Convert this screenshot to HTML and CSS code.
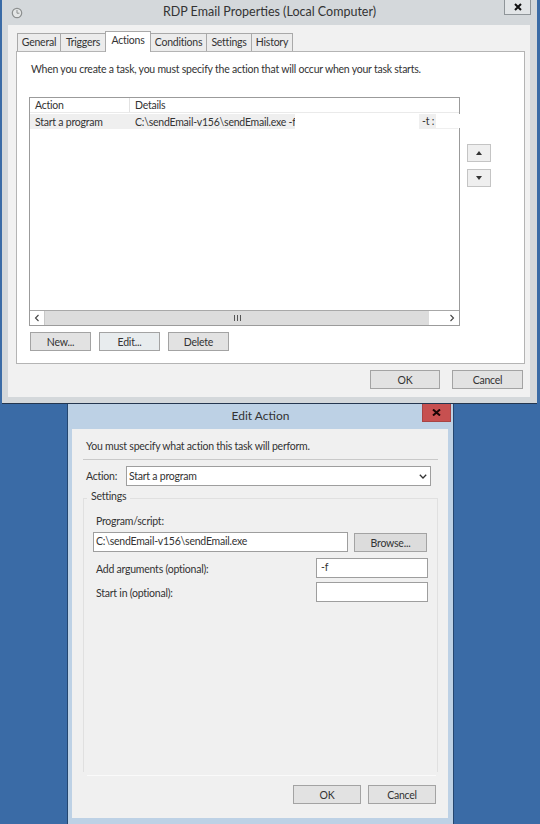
FILE: index.html
```html
<!DOCTYPE html>
<html lang="en">
<head>
    <meta charset="UTF-8">
    <meta name="viewport" content="width=device-width, initial-scale=1.0">
    <title>RDP Email Properties</title>
    <link rel="stylesheet" href="styles.css">
</head>
<body>

<div class="window props">
    <div class="titlebar">
        <svg class="clock" width="12" height="12" viewBox="0 0 12 12"><circle cx="6" cy="6" r="4.7" fill="#e4e6e6" stroke="#8c8f8f" stroke-width="1.2"/><path d="M6 3v3.2h2.4" fill="none" stroke="#8c8f8f"/></svg>
        <span class="title">RDP Email Properties (Local Computer)</span>
        <div class="closebtn">
            <svg width="8" height="8" viewBox="0 0 8 8"><path d="M1 1l6 6M7 1l-6 6" stroke="#111" stroke-width="2"/></svg>
        </div>
    </div>
    <div class="props-body">
        <div class="tabs">
            <div class="tab tab-general">General</div>
            <div class="tab tab-triggers">Triggers</div>
            <div class="tab tab-actions">Actions</div>
            <div class="tab tab-conditions">Conditions</div>
            <div class="tab tab-settings">Settings</div>
            <div class="tab tab-history">History</div>
        </div>
        <div class="panel">
            <p class="intro">When you create a task, you must specify the action that will occur when your task starts.</p>
            <div class="list-row">
                <div class="list">
                    <div class="list-head">
                        <div class="col-action">Action</div>
                        <div class="col-details">Details</div>
                    </div>
                    <div class="list-item">
                        <div class="col-action">Start a program</div>
                        <div class="col-details">C:\sendEmail-v156\sendEmail.exe -f</div>
                        <div class="redact"></div>
                        <div class="flag-t">-t :</div>
                    </div>
                    <div class="list-space"></div>
                    <div class="scrollbar">
                        <div class="arrow">
                            <svg width="6" height="8" viewBox="0 0 6 8"><path d="M4.5 1L1.5 4l3 3" fill="none" stroke="#444" stroke-width="1.1"/></svg>
                        </div>
                        <div class="track">
                            <svg width="7" height="6" viewBox="0 0 7 6"><path d="M.5 0v6M3.5 0v6M6.5 0v6" stroke="#555"/></svg>
                        </div>
                        <div class="track-end"></div>
                        <div class="arrow">
                            <svg width="6" height="8" viewBox="0 0 6 8"><path d="M1.5 1l3 3-3 3" fill="none" stroke="#444" stroke-width="1.1"/></svg>
                        </div>
                    </div>
                </div>
                <div class="updown">
                    <div class="btn btn-move">
                        <svg width="6" height="4" viewBox="0 0 6 4"><path d="M3 0l3 4H0z" fill="#333"/></svg>
                    </div>
                    <div class="btn btn-move">
                        <svg width="6" height="4" viewBox="0 0 6 4"><path d="M0 0h6L3 4z" fill="#333"/></svg>
                    </div>
                </div>
            </div>
            <div class="list-buttons">
                <div class="btn btn-list">New...</div>
                <div class="btn btn-list btn-light">Edit...</div>
                <div class="btn btn-list">Delete</div>
            </div>
        </div>
        <div class="footer props-footer">
            <div class="btn btn-ok">OK</div>
            <div class="btn btn-wide">Cancel</div>
        </div>
    </div>
</div>

<div class="window edit">
    <div class="titlebar edit-title">
        <span class="title">Edit Action</span>
        <div class="closebtn close-red">
            <svg width="9" height="7" viewBox="0 0 9 7"><path d="M1 .5l7 6M8 .5l-7 6" stroke="#1a0505" stroke-width="2"/></svg>
        </div>
    </div>
    <div class="edit-body">
        <p class="edit-intro">You must specify what action this task will perform.</p>
        <div class="action-row">
            <span class="action-label">Action:</span>
            <div class="field select">
                <span>Start a program</span>
                <svg width="8" height="5" viewBox="0 0 8 5"><path d="M.8.8L4 4l3.2-3.2" fill="none" stroke="#333" stroke-width="1.3"/></svg>
            </div>
        </div>
        <div class="settings">
            <span class="settings-label">Settings</span>
            <div class="settings-label-text">Program/script:</div>
            <div class="program-row">
                <div class="field program">C:\sendEmail-v156\sendEmail.exe</div>
                <div class="btn btn-browse">Browse...</div>
            </div>
            <div class="arg-row arg-first">
                <span class="arg-label">Add arguments (optional):</span>
                <div class="field arg">-f</div>
            </div>
            <div class="arg-row">
                <span class="arg-label">Start in (optional):</span>
                <div class="field arg"></div>
            </div>
        </div>
        <div class="footer edit-footer">
            <div class="btn btn-edit">OK</div>
            <div class="btn btn-edit">Cancel</div>
        </div>
    </div>
</div>

</body>
</html>
```

FILE: styles.css
```css
html, body {
    margin: 0;
    height: 824px;
    overflow: hidden;
}
body {
    position: relative;
    background-color: #3a6ba6;
    font-family: Lato, Arial, sans-serif;
    font-size: 10.5px;
    letter-spacing: -0.23px;
    color: #333;
}
p {
    margin: 0;
}

/* windows */
.window {
    position: absolute;
    box-sizing: border-box;
}
.props {
    left: 2px;
    top: 0;
    width: 535px;
    height: 404px;
    background-color: #d4d8db;
    border-bottom: 1px solid #24364f;
}
.edit {
    left: 67px;
    top: 404px;
    width: 387px;
    height: 420px;
    background-color: #bdd1e5;
    border-left: 1px solid #24466f;
    border-right: 1px solid #24466f;
}
.titlebar {
    position: relative;
    height: 25px;
    display: flex;
    align-items: center;
    justify-content: center;
    padding-bottom: 2px;
    box-sizing: border-box;
}
.title {
    font-size: 12.5px;
    letter-spacing: 0;
    color: #333;
}
.clock {
    position: absolute;
    left: 9px;
    top: 7px;
}
.closebtn {
    position: absolute;
    left: 502px;
    top: 0;
    width: 27px;
    height: 15px;
    box-sizing: border-box;
    border: 1px solid #8f9599;
    border-top: none;
    background-color: #e2e5e7;
    display: flex;
    align-items: center;
    justify-content: center;
}
.close-red {
    left: 354px;
    width: 29px;
    height: 18px;
    background-color: #c75050;
    border-color: #a84444;
}

/* properties dialog */
.props-body {
    box-sizing: border-box;
    width: 522px;
    height: 372px;
    margin-left: 6px;
    padding: 7px 5px 0 8px;
    background-color: #f1f1f1;
}
.tabs {
    display: flex;
    align-items: flex-end;
    height: 19px;
    margin-left: 1px;
    position: relative;
    z-index: 1;
}
.tab {
    box-sizing: border-box;
    height: 18px;
    border: 1px solid #a9a9a9;
    border-bottom: none;
    background-color: #ececec;
    text-align: center;
    line-height: 17px;
    margin-right: -1px;
}
.tab-general { width: 44px; }
.tab-triggers { width: 46px; }
.tab-actions {
    width: 46px;
    height: 21px;
    margin-bottom: -1px;
    background-color: #fff;
}
.tab-conditions { width: 57px; }
.tab-settings { width: 46px; }
.tab-history { width: 42px; }
.panel {
    box-sizing: border-box;
    height: 313px;
    border: 1px solid #b4b4b4;
    background-color: #fff;
    padding: 11px 0 0 12px;
}
.intro {
    height: 34px;
    margin-left: 2px;
}
.list-row {
    display: flex;
    align-items: flex-start;
}
.list {
    box-sizing: border-box;
    width: 431px;
    height: 229px;
    border: 1px solid #9b9b9b;
    display: flex;
    flex-direction: column;
}
.list-head, .list-item {
    display: flex;
    align-items: center;
    position: relative;
    line-height: 14px;
}
.list-head {
    height: 14px;
    border-bottom: 1px solid #eaeaea;
}
.list-item {
    height: 15px;
    margin-top: 1px;
    background-color: #efefef;
    margin-right: 1px;
}
.col-action {
    width: 94px;
    padding-left: 5px;
    border-right: 1px solid #e2e2e2;
}
.list-item .col-action {
    border-right-color: transparent;
}
.col-details {
    padding-left: 5px;
    white-space: nowrap;
}
/* blanked out part of the command line */
.redact {
    position: absolute;
    left: 265px;
    top: 0;
    width: 124px;
    height: 15px;
    background-color: #fff;
}
.flag-t {
    position: absolute;
    left: 392px;
    top: 0;
    width: 38px;
    background: linear-gradient(to right, #efefef 14px, #fff 14px);
}
.list-space {
    flex: 1;
}
.scrollbar {
    display: flex;
    height: 14px;
    border-top: 1px solid #a8a8a8;
}
.arrow {
    width: 14px;
    display: flex;
    align-items: center;
    justify-content: center;
    background-color: #fff;
}
.track {
    flex: 1;
    background-color: #dcdcdc;
    display: flex;
    align-items: center;
    justify-content: center;
    border-left: 1px solid #c8c8c8;
}
.track-end {
    width: 16px;
    background-color: #fff;
}
.updown {
    display: flex;
    flex-direction: column;
    gap: 7px;
    margin: 47px 0 0 7px;
}
.list-buttons {
    display: flex;
    gap: 8px;
    margin: 6px 0 0 1px;
}

/* buttons */
.btn {
    box-sizing: border-box;
    border: 1px solid #a3a3a3;
    background-color: #e2e2e2;
    display: flex;
    align-items: center;
    justify-content: center;
    height: 19px;
}
.btn-move {
    width: 24px;
    height: 18px;
    border-color: #c4c4c4;
    background-color: #efefef;
}
.btn-list {
    width: 61px;
}
.btn-light {
    background-color: #e8ecee;
}
.btn-ok {
    width: 70px;
}
.btn-wide {
    width: 71px;
}
.footer {
    display: flex;
    justify-content: flex-end;
}
.props-footer {
    gap: 12px;
    margin-top: 6px;
    padding-right: 2px;
}

/* edit action dialog */
.edit-title .title {
    font-size: 12px;
}
.edit-body {
    box-sizing: border-box;
    width: 376px;
    height: 389px;
    margin-left: 4px;
    padding: 9px 0 0 14px;
    background-color: #f0f0f0;
}
.edit-intro {
    height: 22px;
    line-height: 16px;
    width: 355px;
    margin-left: -3px;
    padding-left: 3px;
    box-sizing: border-box;
    border-bottom: 1px solid #c9c9c9;
}
.action-row {
    display: flex;
    align-items: center;
    margin-top: 6px;
    height: 20px;
}
.action-label {
    width: 40px;
}
.field {
    box-sizing: border-box;
    border: 1px solid #9e9e9e;
    background-color: #fff;
    height: 20px;
    line-height: 17px;
    padding-left: 2px;
    white-space: nowrap;
}
.select {
    width: 305px;
    display: flex;
    align-items: center;
    justify-content: space-between;
    padding-right: 3px;
}
.settings {
    position: relative;
    box-sizing: border-box;
    width: 355px;
    height: 274px;
    margin: 12px 0 0 -3px;
    border: 1px solid #e0e0e0;
    border-bottom: none;
    padding: 14px 0 0 9px;
}
.settings-label {
    position: absolute;
    left: 3px;
    top: -9px;
    padding: 0 4px;
    background-color: #f0f0f0;
}
.settings-label-text {
    margin-left: 3px;
    line-height: 16px;
}
.program-row {
    display: flex;
    align-items: center;
    gap: 6px;
    margin-top: 3px;
}
.program {
    width: 255px;
}
.btn-browse {
    width: 73px;
    background-color: #dcdcdc;
    margin-top: 1px;
}
.arg-row {
    display: flex;
    align-items: center;
    justify-content: space-between;
    width: 335px;
    margin-top: 4px;
    padding-left: 3px;
    box-sizing: border-box;
}
.arg-first {
    margin-top: 6px;
}
.arg-label {
    padding-top: 2px;
}
.arg {
    width: 112px;
    padding-left: 4px;
}
.edit-footer {
    gap: 7px;
    box-sizing: border-box;
    width: 349px;
    margin: 3px 0 0 1px;
    padding-top: 9px;
    border-top: 1px solid #fafafa;
}
.btn-edit {
    width: 68px;
}
```
